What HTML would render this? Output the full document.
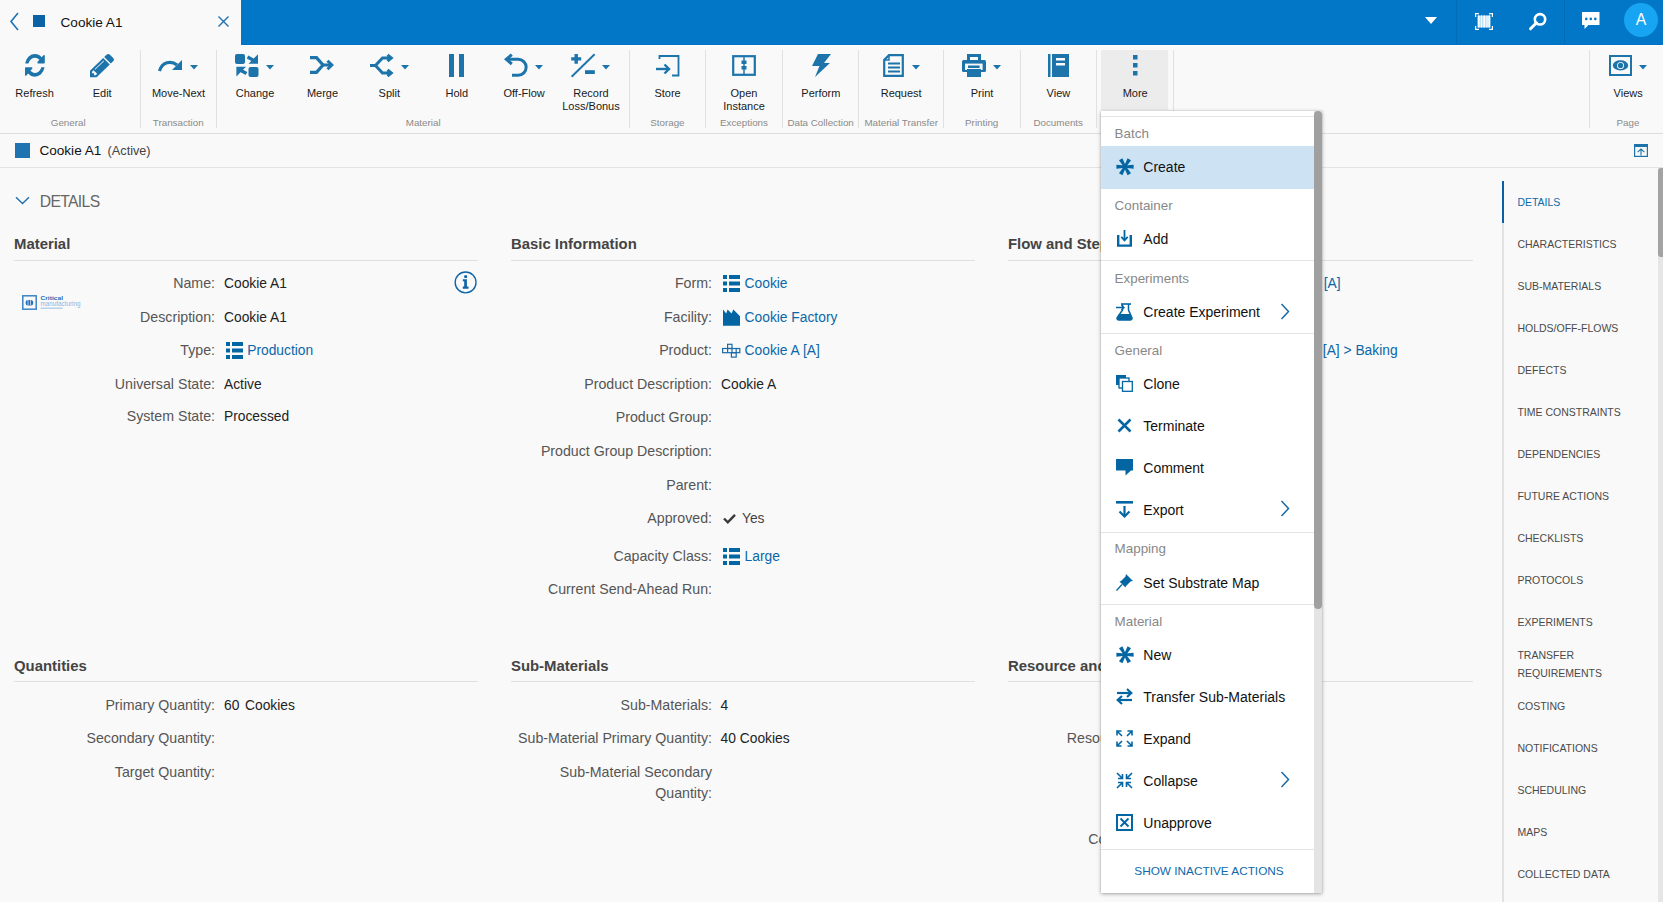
<!DOCTYPE html>
<html><head><meta charset="utf-8"><style>
html,body{margin:0;padding:0;width:1663px;height:902px;overflow:hidden;background:#f9f9f9;font-family:"Liberation Sans", sans-serif;}
.t{position:absolute;white-space:nowrap;}
svg{overflow:visible;}
</style></head><body>
<div style="position:absolute;left:0px;top:0px;width:1663px;height:45px;background:#f9f9f9;"></div>
<div style="position:absolute;left:241px;top:0px;width:1422px;height:45px;background:#0277c7;"></div>
<svg style="position:absolute;left:9px;top:12px;" width="11" height="19" viewBox="0 0 11 19"><path d="M9 1 L2 9.5 L9 18" fill="none" stroke="#1a73b8" stroke-width="1.6"/></svg>
<div style="position:absolute;left:33px;top:15px;width:12px;height:12px;background:#0b62a4;"></div>
<div class="t" style="left:60.5px;top:16.00px;font-size:13.6px;line-height:13.6px;color:#111;font-weight:normal;">Cookie A1</div>
<svg style="position:absolute;left:217px;top:15px;" width="13" height="13" viewBox="0 0 13 13"><path d="M1.5 1.5 L11.5 11.5 M11.5 1.5 L1.5 11.5" fill="none" stroke="#1d6fae" stroke-width="1.4"/></svg>
<svg style="position:absolute;left:1425px;top:17px;" width="12" height="7" viewBox="0 0 12 7"><path d="M0 0 H12 L6 7 Z" fill="#fff"/></svg>
<div style="position:absolute;left:1456px;top:0px;width:1px;height:45px;background:transparent;border-left:1px dotted rgba(0,40,80,0.3);"></div>
<div style="position:absolute;left:1564px;top:0px;width:1px;height:45px;background:transparent;border-left:1px dotted rgba(0,40,80,0.3);"></div>
<svg style="position:absolute;left:1475px;top:13px;" width="18" height="17" viewBox="0 0 18 17"><path d="M0.6 4 V0.6 H4 M14 0.6 H17.4 V4 M17.4 13 V16.4 H14 M4 16.4 H0.6 V13" fill="none" stroke="#fff" stroke-width="1.2"/><rect x="2.5" y="2.5" width="13" height="12" fill="#bfe3f7"/><rect x="3" y="2.5" width="1.5" height="12" fill="#fff"/><rect x="6" y="2.5" width="1" height="12" fill="#fff"/><rect x="8.5" y="2.5" width="1.5" height="12" fill="#fff"/><rect x="11.5" y="2.5" width="1" height="12" fill="#fff"/><rect x="13.5" y="2.5" width="1.5" height="12" fill="#fff"/></svg>
<svg style="position:absolute;left:1528px;top:12px;" width="20" height="19" viewBox="0 0 20 19"><circle cx="12" cy="7.3" r="5.2" fill="none" stroke="#fff" stroke-width="2.6"/><path d="M8.5 10.8 L2.5 16.8" stroke="#fff" stroke-width="3" stroke-linecap="round"/></svg>
<svg style="position:absolute;left:1582px;top:12px;" width="18" height="17" viewBox="0 0 18 17"><path d="M0 0 H17.5 V13 H6.5 L2.5 17 V13 H0 Z" fill="#fff"/><circle cx="4.3" cy="6.9" r="1.3" fill="#0277c7"/><circle cx="8.8" cy="6.9" r="1.3" fill="#0277c7"/><circle cx="13.3" cy="6.9" r="1.3" fill="#0277c7"/></svg>
<div style="position:absolute;left:1624px;top:3px;width:34px;height:34px;border-radius:50%;background:#17a4f2;"></div>
<div class="t" style="left:1341px;width:600px;text-align:center;top:12.00px;font-size:15.8px;line-height:15.8px;color:#fff;font-weight:normal;">A</div>
<div style="position:absolute;left:0px;top:45px;width:1663px;height:88px;background:#f9f9f9;"></div>
<div style="position:absolute;left:241px;top:44px;width:1422px;height:1px;background:#0271c2;"></div>
<div style="position:absolute;left:241px;top:45px;width:1422px;height:1px;background:#ffffff;"></div>
<div style="position:absolute;left:0px;top:133px;width:1663px;height:1px;background:#dedede;"></div>
<div style="position:absolute;left:140px;top:50px;width:1px;height:78px;background:#e1e1e1;"></div>
<div style="position:absolute;left:216px;top:50px;width:1px;height:78px;background:#e1e1e1;"></div>
<div style="position:absolute;left:629px;top:50px;width:1px;height:78px;background:#e1e1e1;"></div>
<div style="position:absolute;left:705px;top:50px;width:1px;height:78px;background:#e1e1e1;"></div>
<div style="position:absolute;left:782px;top:50px;width:1px;height:78px;background:#e1e1e1;"></div>
<div style="position:absolute;left:858px;top:50px;width:1px;height:78px;background:#e1e1e1;"></div>
<div style="position:absolute;left:943px;top:50px;width:1px;height:78px;background:#e1e1e1;"></div>
<div style="position:absolute;left:1020px;top:50px;width:1px;height:78px;background:#e1e1e1;"></div>
<div style="position:absolute;left:1096px;top:50px;width:1px;height:78px;background:#e1e1e1;"></div>
<div style="position:absolute;left:1173px;top:50px;width:1px;height:78px;background:#e1e1e1;"></div>
<div style="position:absolute;left:1589px;top:50px;width:1px;height:78px;background:#e1e1e1;"></div>
<div style="position:absolute;left:1101px;top:50px;width:67px;height:60px;background:#ececec;"></div>
<div class="t" style="left:-265.4px;width:600px;text-align:center;top:88.00px;font-size:11px;line-height:11px;color:#1a1a1a;font-weight:normal;">Refresh</div>
<div class="t" style="left:-197.8px;width:600px;text-align:center;top:88.00px;font-size:11px;line-height:11px;color:#1a1a1a;font-weight:normal;">Edit</div>
<div class="t" style="left:-121.5px;width:600px;text-align:center;top:88.00px;font-size:11px;line-height:11px;color:#1a1a1a;font-weight:normal;">Move-Next</div>
<div class="t" style="left:-45px;width:600px;text-align:center;top:88.00px;font-size:11px;line-height:11px;color:#1a1a1a;font-weight:normal;">Change</div>
<div class="t" style="left:22.5px;width:600px;text-align:center;top:88.00px;font-size:11px;line-height:11px;color:#1a1a1a;font-weight:normal;">Merge</div>
<div class="t" style="left:89.30000000000001px;width:600px;text-align:center;top:88.00px;font-size:11px;line-height:11px;color:#1a1a1a;font-weight:normal;">Split</div>
<div class="t" style="left:156.8px;width:600px;text-align:center;top:88.00px;font-size:11px;line-height:11px;color:#1a1a1a;font-weight:normal;">Hold</div>
<div class="t" style="left:224.10000000000002px;width:600px;text-align:center;top:88.00px;font-size:11px;line-height:11px;color:#1a1a1a;font-weight:normal;">Off-Flow</div>
<div class="t" style="left:291px;width:600px;text-align:center;top:88.00px;font-size:11px;line-height:11px;color:#1a1a1a;font-weight:normal;">Record</div>
<div class="t" style="left:367.6px;width:600px;text-align:center;top:88.00px;font-size:11px;line-height:11px;color:#1a1a1a;font-weight:normal;">Store</div>
<div class="t" style="left:444px;width:600px;text-align:center;top:88.00px;font-size:11px;line-height:11px;color:#1a1a1a;font-weight:normal;">Open</div>
<div class="t" style="left:520.9px;width:600px;text-align:center;top:88.00px;font-size:11px;line-height:11px;color:#1a1a1a;font-weight:normal;">Perform</div>
<div class="t" style="left:601.2px;width:600px;text-align:center;top:88.00px;font-size:11px;line-height:11px;color:#1a1a1a;font-weight:normal;">Request</div>
<div class="t" style="left:682px;width:600px;text-align:center;top:88.00px;font-size:11px;line-height:11px;color:#1a1a1a;font-weight:normal;">Print</div>
<div class="t" style="left:758.4000000000001px;width:600px;text-align:center;top:88.00px;font-size:11px;line-height:11px;color:#1a1a1a;font-weight:normal;">View</div>
<div class="t" style="left:835.2px;width:600px;text-align:center;top:88.00px;font-size:11px;line-height:11px;color:#1a1a1a;font-weight:normal;">More</div>
<div class="t" style="left:1328.2px;width:600px;text-align:center;top:88.00px;font-size:11px;line-height:11px;color:#1a1a1a;font-weight:normal;">Views</div>
<div class="t" style="left:291px;width:600px;text-align:center;top:101.00px;font-size:11px;line-height:11px;color:#1a1a1a;font-weight:normal;">Loss/Bonus</div>
<div class="t" style="left:444px;width:600px;text-align:center;top:101.00px;font-size:11px;line-height:11px;color:#1a1a1a;font-weight:normal;">Instance</div>
<div class="t" style="left:-231.8px;width:600px;text-align:center;top:118.00px;font-size:9.8px;line-height:9.8px;color:#8a8a8a;font-weight:normal;">General</div>
<div class="t" style="left:-121.75px;width:600px;text-align:center;top:118.00px;font-size:9.8px;line-height:9.8px;color:#8a8a8a;font-weight:normal;">Transaction</div>
<div class="t" style="left:123.19999999999999px;width:600px;text-align:center;top:118.00px;font-size:9.8px;line-height:9.8px;color:#8a8a8a;font-weight:normal;">Material</div>
<div class="t" style="left:367.4px;width:600px;text-align:center;top:118.00px;font-size:9.8px;line-height:9.8px;color:#8a8a8a;font-weight:normal;">Storage</div>
<div class="t" style="left:444px;width:600px;text-align:center;top:118.00px;font-size:9.8px;line-height:9.8px;color:#8a8a8a;font-weight:normal;">Exceptions</div>
<div class="t" style="left:520.6px;width:600px;text-align:center;top:118.00px;font-size:9.8px;line-height:9.8px;color:#8a8a8a;font-weight:normal;">Data Collection</div>
<div class="t" style="left:601.2px;width:600px;text-align:center;top:118.00px;font-size:9.8px;line-height:9.8px;color:#8a8a8a;font-weight:normal;">Material Transfer</div>
<div class="t" style="left:681.7px;width:600px;text-align:center;top:118.00px;font-size:9.8px;line-height:9.8px;color:#8a8a8a;font-weight:normal;">Printing</div>
<div class="t" style="left:758.2px;width:600px;text-align:center;top:118.00px;font-size:9.8px;line-height:9.8px;color:#8a8a8a;font-weight:normal;">Documents</div>
<div class="t" style="left:1328px;width:600px;text-align:center;top:118.00px;font-size:9.8px;line-height:9.8px;color:#8a8a8a;font-weight:normal;">Page</div>
<svg style="position:absolute;left:24.5px;top:54.2px" width="19.8" height="22.7" viewBox="0 128 1536 1536" preserveAspectRatio="none"><path d="M1511 1056q0 5-1 7-64 268-268 434.5t-478 166.5q-146 0-282.5-55t-243.5-157l-129 129q-19 19-45 19t-45-19-19-45v-448q0-26 19-45t45-19h448q26 0 45 19t19 45-19 45l-137 137q71 66 161 102t187 36q134 0 250-65t186-179q11-17 53-117 8-23 30-23h192q13 0 22.5 9.5t9.5 22.5zm25-800v448q0 26-19 45t-45 19h-448q-26 0-45-19t-19-45 19-45l138-138q-148-137-349-137-134 0-250 65t-186 179q-11 17-53 117-8 23-30 23h-199q-13 0-22.5-9.5t-9.5-22.5v-7q65-268 270-434.5t480-166.5q146 0 284 55.5t245 156.5l130-129q19-19 45-19t45 19 19 45z" fill="#1c74ab"/></svg>
<svg style="position:absolute;left:90px;top:53.8px" width="24" height="23.2" viewBox="0 149 1515 1515" preserveAspectRatio="none"><path d="M363 1536l91-91-235-235-91 91v107h128v128h107zm523-928q0-22-22-22-10 0-17 7l-542 542q-7 7-7 17 0 22 22 22 10 0 17-7l542-542q7-7 7-17zm-54-192l416 416-832 832h-416v-416zm683 96q0 53-37 90l-166 166-416-416 166-165q36-38 90-38 53 0 91 38l235 234q37 39 37 91z" fill="#1c74ab"/></svg>
<svg style="position:absolute;left:158px;top:59px;" width="25" height="13" viewBox="0 0 25 13"><path d="M1.5 12 C4 3, 13 1, 19 6" fill="none" stroke="#1c74ab" stroke-width="3.2"/><path d="M24 1 V11 H14 Z" fill="#1c74ab"/></svg>
<svg style="position:absolute;left:190px;top:64.5px;" width="8" height="5" viewBox="0 0 8 5"><path d="M0 0 H8 L4 4.5 Z" fill="#1c74ab"/></svg>
<svg style="position:absolute;left:235px;top:54px;" width="24" height="23" viewBox="0 0 24 23"><rect x="0" y="0" width="10" height="10" rx="2" fill="#1c74ab"/><rect x="13.5" y="13" width="10" height="10" rx="2" fill="#1c74ab"/><path d="M12.5 3 L18 6" stroke="#1c74ab" stroke-width="3.2"/><path d="M23 0.3 V9.7 H13.5 Z" fill="#1c74ab"/><path d="M11.5 19.5 L6 16.5" stroke="#1c74ab" stroke-width="3.2"/><path d="M1.4 12.8 H11 L1.4 22.6 Z" fill="#1c74ab"/></svg>
<svg style="position:absolute;left:266px;top:64.5px;" width="8" height="5" viewBox="0 0 8 5"><path d="M0 0 H8 L4 4.5 Z" fill="#1c74ab"/></svg>
<svg style="position:absolute;left:310px;top:56px;" width="24" height="19" viewBox="0 0 24 19"><path d="M0 1.6 H6.5 L13 9 L6.5 16.4 H0" fill="none" stroke="#1c74ab" stroke-width="3.2"/><path d="M12 9 H21.5" stroke="#1c74ab" stroke-width="3"/><path d="M17.5 4.8 L21.8 9 L17.5 13.2" fill="none" stroke="#1c74ab" stroke-width="3"/></svg>
<svg style="position:absolute;left:370px;top:54px;" width="24" height="23" viewBox="0 0 24 23"><path d="M0 11.5 H6" stroke="#1c74ab" stroke-width="3"/><path d="M21 4 H12.5 L5.5 11.5 L12.5 19 H21" fill="none" stroke="#1c74ab" stroke-width="3"/><path d="M17.5 0.8 L21.3 4 L17.5 7.2 M17.5 15.8 L21.3 19 L17.5 22.2" fill="none" stroke="#1c74ab" stroke-width="3"/></svg>
<svg style="position:absolute;left:400.5px;top:64.5px;" width="8" height="5" viewBox="0 0 8 5"><path d="M0 0 H8 L4 4.5 Z" fill="#1c74ab"/></svg>
<svg style="position:absolute;left:449px;top:54px;" width="15" height="23" viewBox="0 0 15 23"><rect x="0" y="0" width="5" height="23" fill="#1c74ab"/><rect x="10" y="0" width="5" height="23" fill="#1c74ab"/></svg>
<svg style="position:absolute;left:504px;top:54px;" width="24" height="23" viewBox="0 0 24 23"><path d="M2 5.3 H14.2 A7.95 7.95 0 0 1 14.2 21.2 H8" fill="none" stroke="#1c74ab" stroke-width="3"/><path d="M7.8 0.6 L2.3 5.3 L7.8 10" fill="none" stroke="#1c74ab" stroke-width="3"/></svg>
<svg style="position:absolute;left:534.8px;top:64.5px;" width="8" height="5" viewBox="0 0 8 5"><path d="M0 0 H8 L4 4.5 Z" fill="#1c74ab"/></svg>
<svg style="position:absolute;left:570px;top:54px;" width="25" height="23" viewBox="0 0 25 23"><path d="M1.2 4.9 H11.2 M6.2 0 V9.7" stroke="#1c74ab" stroke-width="3.4"/><path d="M15 18.1 H24.8" stroke="#1c74ab" stroke-width="3.8"/><path d="M24.6 0.3 L1.6 22.8" stroke="#1c74ab" stroke-width="1.9"/></svg>
<svg style="position:absolute;left:602px;top:64.5px;" width="8" height="5" viewBox="0 0 8 5"><path d="M0 0 H8 L4 4.5 Z" fill="#1c74ab"/></svg>
<svg style="position:absolute;left:656px;top:55px;" width="24" height="22" viewBox="0 0 24 22"><path d="M3.5 4 V1 H22.5 V20.5 H16" fill="none" stroke="#1c74ab" stroke-width="1.8"/><path d="M0 14 H12" stroke="#1c74ab" stroke-width="2.4"/><path d="M8.5 9.5 L13 14 L8.5 18.5" fill="none" stroke="#1c74ab" stroke-width="2.4"/></svg>
<svg style="position:absolute;left:732px;top:55px;" width="24" height="21" viewBox="0 0 24 21"><rect x="1.2" y="1.2" width="21.6" height="18.6" fill="none" stroke="#1c74ab" stroke-width="2.2"/><path d="M12 1 V20" stroke="#1c74ab" stroke-width="1.5"/><rect x="9.5" y="5.5" width="5" height="3.5" fill="#1c74ab"/><rect x="9.5" y="11" width="5" height="3.5" fill="#1c74ab"/></svg>
<svg style="position:absolute;left:810px;top:54px;" width="22" height="23" viewBox="0 0 22 23"><path d="M8 0 H21 L14 9 H20 L5 23 L9.5 12 H2 Z" fill="#1c74ab"/></svg>
<svg style="position:absolute;left:883px;top:54px;" width="21" height="23" viewBox="0 0 21 23"><path d="M6 1.2 H19.8 V21.8 H1.2 V6 Z" fill="none" stroke="#1c74ab" stroke-width="2.2"/><path d="M1.2 6 H6 V1.2" fill="none" stroke="#1c74ab" stroke-width="1.5"/><path d="M5 9.5 H17 M5 13.5 H17 M5 17.5 H17" stroke="#1c74ab" stroke-width="1.8"/></svg>
<svg style="position:absolute;left:912px;top:64.5px;" width="8" height="5" viewBox="0 0 8 5"><path d="M0 0 H8 L4 4.5 Z" fill="#1c74ab"/></svg>
<svg style="position:absolute;left:962px;top:54px;" width="24" height="23" viewBox="0 0 24 23"><rect x="5" y="0" width="14" height="7" fill="#1c74ab"/><rect x="8" y="3" width="8" height="3" fill="#f9f9f9"/><rect x="0" y="6" width="24" height="12" rx="1.5" fill="#1c74ab"/><rect x="3" y="9.6" width="17.6" height="6.3" fill="#f9f9f9"/><rect x="6" y="11.5" width="11.6" height="2.5" fill="#1c74ab"/><rect x="5" y="15" width="14" height="8" fill="#1c74ab"/></svg>
<svg style="position:absolute;left:992.5px;top:64.5px;" width="8" height="5" viewBox="0 0 8 5"><path d="M0 0 H8 L4 4.5 Z" fill="#1c74ab"/></svg>
<svg style="position:absolute;left:1048px;top:54px;" width="21" height="23" viewBox="0 0 21 23"><rect x="0" y="0" width="2.5" height="23" fill="#1c74ab"/><rect x="4" y="0" width="17" height="23" fill="#1c74ab"/><rect x="8" y="4" width="9" height="2.5" fill="#fafafa"/><rect x="8" y="9" width="9" height="2.5" fill="#fafafa"/></svg>
<svg style="position:absolute;left:1133px;top:55px;" width="5" height="21" viewBox="0 0 5 21"><rect x="0" y="0" width="4.5" height="4.5" fill="#1c74ab"/><rect x="0" y="8" width="4.5" height="4.5" fill="#1c74ab"/><rect x="0" y="16" width="4.5" height="4.5" fill="#1c74ab"/></svg>
<svg style="position:absolute;left:1609px;top:55px;" width="23" height="21" viewBox="0 0 23 21"><rect x="1" y="1" width="21" height="19" fill="none" stroke="#1c74ab" stroke-width="2"/><ellipse cx="11.5" cy="10.4" rx="7.7" ry="5.1" fill="#1c74ab"/><circle cx="11.5" cy="10.4" r="3.5" fill="#f9f9f9"/><circle cx="11.5" cy="10.4" r="2.6" fill="#1c74ab"/></svg>
<svg style="position:absolute;left:1639px;top:64.5px;" width="8" height="5" viewBox="0 0 8 5"><path d="M0 0 H8 L4 4.5 Z" fill="#1c74ab"/></svg>
<div style="position:absolute;left:0px;top:134px;width:1663px;height:33px;background:#f9f9f9;"></div>
<div style="position:absolute;left:0px;top:167px;width:1663px;height:1px;background:#e3e3e3;"></div>
<div style="position:absolute;left:15px;top:143px;width:15px;height:15px;background:#1f73b0;"></div>
<div class="t" style="left:39.4px;top:144.00px;font-size:13.6px;line-height:13.6px;color:#111;font-weight:normal;">Cookie A1</div>
<div class="t" style="left:107.6px;top:145.00px;font-size:12.7px;line-height:12.7px;color:#444;font-weight:normal;">(Active)</div>
<svg style="position:absolute;left:1634px;top:144px;" width="14" height="13" viewBox="0 0 14 13"><rect x="0.6" y="0.6" width="12.8" height="11.8" fill="none" stroke="#1c74ab" stroke-width="1.2"/><rect x="0" y="0" width="14" height="3" fill="#1c74ab"/><path d="M7 5 V11.5 M3.6 8.2 L7 5 L10.4 8.2" fill="none" stroke="#1c74ab" stroke-width="1.1"/></svg>
<div style="position:absolute;left:0px;top:168px;width:1663px;height:734px;background:#f9f9f9;"></div>
<svg style="position:absolute;left:15px;top:196px;" width="15" height="9" viewBox="0 0 15 9"><path d="M1 1.2 L7.5 7.5 L14 1.2" fill="none" stroke="#1f6fae" stroke-width="1.4"/></svg>
<div class="t" style="left:39.8px;top:194.00px;font-size:15.7px;line-height:15.7px;color:#666;font-weight:normal;letter-spacing:-0.65px;">DETAILS</div>
<div class="t" style="left:14px;top:237.00px;font-size:14.9px;line-height:14.9px;color:#444;font-weight:bold;">Material</div>
<div style="position:absolute;left:14px;top:260px;width:464px;height:1px;background:#e0e0e0;"></div>
<div class="t" style="left:511px;top:237.00px;font-size:14.9px;line-height:14.9px;color:#444;font-weight:bold;">Basic Information</div>
<div style="position:absolute;left:511px;top:260px;width:464px;height:1px;background:#e0e0e0;"></div>
<div class="t" style="left:1008px;top:237.00px;font-size:14.9px;line-height:14.9px;color:#444;font-weight:bold;">Flow and Step</div>
<div style="position:absolute;left:1008px;top:260px;width:465px;height:1px;background:#e0e0e0;"></div>
<div class="t" style="right:1448px;text-align:right;top:276.00px;font-size:14.2px;line-height:14.2px;color:#555;font-weight:normal;">Name:</div>
<div class="t" style="left:224px;top:277.00px;font-size:13.8px;line-height:13.8px;color:#222;font-weight:normal;">Cookie A1</div>
<div class="t" style="right:1448px;text-align:right;top:310.00px;font-size:14.2px;line-height:14.2px;color:#555;font-weight:normal;">Description:</div>
<div class="t" style="left:224px;top:311.00px;font-size:13.8px;line-height:13.8px;color:#222;font-weight:normal;">Cookie A1</div>
<div class="t" style="right:1448px;text-align:right;top:343.00px;font-size:14.2px;line-height:14.2px;color:#555;font-weight:normal;">Type:</div>
<div class="t" style="left:247.2px;top:344.00px;font-size:13.8px;line-height:13.8px;color:#0a67a8;font-weight:normal;">Production</div>
<div class="t" style="right:1448px;text-align:right;top:377.00px;font-size:14.2px;line-height:14.2px;color:#555;font-weight:normal;">Universal State:</div>
<div class="t" style="left:224px;top:378.00px;font-size:13.8px;line-height:13.8px;color:#222;font-weight:normal;">Active</div>
<div class="t" style="right:1448px;text-align:right;top:409.00px;font-size:14.2px;line-height:14.2px;color:#555;font-weight:normal;">System State:</div>
<div class="t" style="left:224px;top:410.00px;font-size:13.8px;line-height:13.8px;color:#222;font-weight:normal;">Processed</div>
<svg style="position:absolute;left:226px;top:342px;" width="17" height="17" viewBox="0 0 17 17"><rect x="0" y="0" width="4" height="4" fill="#0366a3"/><rect x="6" y="0" width="11" height="4" fill="#0366a3"/><rect x="0" y="6.5" width="4" height="4" fill="#0366a3"/><rect x="6" y="6.5" width="11" height="4" fill="#0366a3"/><rect x="0" y="13" width="4" height="4" fill="#0366a3"/><rect x="6" y="13" width="11" height="4" fill="#0366a3"/></svg>
<svg style="position:absolute;left:454px;top:271px;" width="23" height="23" viewBox="0 0 23 23"><circle cx="11.6" cy="11.4" r="10.4" fill="none" stroke="#0e64a8" stroke-width="1.35"/><rect x="10.2" y="4.3" width="2.9" height="2.6" rx="0.6" fill="#0e64a8"/><path d="M8.8 8.2 H12.9 V15.6 H14.5 V17.8 H8.8 V15.6 H10.2 V10.3 H8.8 Z" fill="#0e64a8"/></svg>
<svg style="position:absolute;left:22px;top:295px;" width="60" height="16" viewBox="0 0 60 16"><rect x="0.8" y="0.8" width="13.4" height="13.4" fill="none" stroke="#3d83c6" stroke-width="1.5"/><rect x="3.6" y="4.9" width="7.6" height="5.5" rx="2.5" fill="#2a72b8"/><rect x="5.6" y="4.9" width="0.8" height="5.5" fill="#cfe0f0"/><rect x="8.2" y="4.9" width="0.8" height="5.5" fill="#cfe0f0"/><text x="18.5" y="5.3" font-family="Liberation Sans" font-size="6" font-weight="bold" fill="#2a6cb0" textLength="22.5" lengthAdjust="spacingAndGlyphs">Critical</text><text x="18.5" y="11" font-family="Liberation Sans" font-size="6.3" fill="#8db6de" textLength="40" lengthAdjust="spacingAndGlyphs">manufacturing</text><rect x="18.5" y="12.6" width="22" height="1.2" fill="#a9c8e8"/></svg>
<div class="t" style="right:951px;text-align:right;top:276.00px;font-size:14.2px;line-height:14.2px;color:#555;font-weight:normal;">Form:</div>
<div class="t" style="left:744.6px;top:277.00px;font-size:13.8px;line-height:13.8px;color:#0a67a8;font-weight:normal;">Cookie</div>
<svg style="position:absolute;left:723px;top:275px;" width="17" height="17" viewBox="0 0 17 17"><rect x="0" y="0" width="4" height="4" fill="#0366a3"/><rect x="6" y="0" width="11" height="4" fill="#0366a3"/><rect x="0" y="6.5" width="4" height="4" fill="#0366a3"/><rect x="6" y="6.5" width="11" height="4" fill="#0366a3"/><rect x="0" y="13" width="4" height="4" fill="#0366a3"/><rect x="6" y="13" width="11" height="4" fill="#0366a3"/></svg>
<div class="t" style="right:951px;text-align:right;top:310.00px;font-size:14.2px;line-height:14.2px;color:#555;font-weight:normal;">Facility:</div>
<div class="t" style="left:744.6px;top:311.00px;font-size:13.8px;line-height:13.8px;color:#0a67a8;font-weight:normal;">Cookie Factory</div>
<svg style="position:absolute;left:723px;top:309px;" width="17" height="17" viewBox="0 0 17 17"><path d="M0 16.8 V0.5 L3.2 4.5 L4.6 0.5 L8.5 4.5 L10.4 0.5 L17 7.2 V16.8 Z" fill="#0366a3"/></svg>
<div class="t" style="right:951px;text-align:right;top:343.00px;font-size:14.2px;line-height:14.2px;color:#555;font-weight:normal;">Product:</div>
<div class="t" style="left:744.6px;top:344.00px;font-size:13.8px;line-height:13.8px;color:#0a67a8;font-weight:normal;">Cookie A [A]</div>
<svg style="position:absolute;left:722px;top:343px;" width="18" height="15" viewBox="0 0 18 15"><g fill="none" stroke="#1a6aa8" stroke-width="1.2"><rect x="5.6" y="1.3" width="4.4" height="4.2"/><rect x="0.6" y="5.5" width="17.2" height="4.2"/><rect x="9.4" y="9.7" width="4.8" height="4.4"/><path d="M5.6 5.5 V9.7 M10 5.5 V9.7 M14.2 5.5 V9.7"/></g></svg>
<div class="t" style="right:951px;text-align:right;top:377.00px;font-size:14.2px;line-height:14.2px;color:#555;font-weight:normal;">Product Description:</div>
<div class="t" style="left:721px;top:378.00px;font-size:13.8px;line-height:13.8px;color:#222;font-weight:normal;">Cookie A</div>
<div class="t" style="right:951px;text-align:right;top:410.00px;font-size:14.2px;line-height:14.2px;color:#555;font-weight:normal;">Product Group:</div>
<div class="t" style="right:951px;text-align:right;top:444.00px;font-size:14.2px;line-height:14.2px;color:#555;font-weight:normal;">Product Group Description:</div>
<div class="t" style="right:951px;text-align:right;top:478.00px;font-size:14.2px;line-height:14.2px;color:#555;font-weight:normal;">Parent:</div>
<div class="t" style="right:951px;text-align:right;top:511.00px;font-size:14.2px;line-height:14.2px;color:#555;font-weight:normal;">Approved:</div>
<div class="t" style="left:742px;top:512.00px;font-size:13.8px;line-height:13.8px;color:#444;font-weight:normal;">Yes</div>
<svg style="position:absolute;left:723px;top:513px;" width="13" height="11" viewBox="0 0 13 11"><path d="M1 5.5 L4.8 9.3 L12 1.8" fill="none" stroke="#3a3a3a" stroke-width="2.4"/></svg>
<div class="t" style="right:951px;text-align:right;top:549.00px;font-size:14.2px;line-height:14.2px;color:#555;font-weight:normal;">Capacity Class:</div>
<div class="t" style="left:744.6px;top:550.00px;font-size:13.8px;line-height:13.8px;color:#0a67a8;font-weight:normal;">Large</div>
<svg style="position:absolute;left:723px;top:548px;" width="17" height="17" viewBox="0 0 17 17"><rect x="0" y="0" width="4" height="4" fill="#0366a3"/><rect x="6" y="0" width="11" height="4" fill="#0366a3"/><rect x="0" y="6.5" width="4" height="4" fill="#0366a3"/><rect x="6" y="6.5" width="11" height="4" fill="#0366a3"/><rect x="0" y="13" width="4" height="4" fill="#0366a3"/><rect x="6" y="13" width="11" height="4" fill="#0366a3"/></svg>
<div class="t" style="right:951px;text-align:right;top:582.00px;font-size:14.2px;line-height:14.2px;color:#555;font-weight:normal;">Current Send-Ahead Run:</div>
<div class="t" style="left:1323.7px;top:277.00px;font-size:13.8px;line-height:13.8px;color:#0a67a8;font-weight:normal;">[A]</div>
<div class="t" style="left:1322.8px;top:344.00px;font-size:13.8px;line-height:13.8px;color:#0a67a8;font-weight:normal;">[A] &gt; Baking</div>
<div class="t" style="left:14px;top:659.00px;font-size:14.9px;line-height:14.9px;color:#444;font-weight:bold;">Quantities</div>
<div style="position:absolute;left:14px;top:681px;width:464px;height:1px;background:#e0e0e0;"></div>
<div class="t" style="left:511px;top:659.00px;font-size:14.9px;line-height:14.9px;color:#444;font-weight:bold;">Sub-Materials</div>
<div style="position:absolute;left:511px;top:681px;width:464px;height:1px;background:#e0e0e0;"></div>
<div class="t" style="left:1008px;top:659.00px;font-size:14.9px;line-height:14.9px;color:#444;font-weight:bold;">Resource and</div>
<div style="position:absolute;left:1008px;top:681px;width:465px;height:1px;background:#e0e0e0;"></div>
<div class="t" style="right:1448px;text-align:right;top:698.00px;font-size:14.2px;line-height:14.2px;color:#555;font-weight:normal;">Primary Quantity:</div>
<div class="t" style="left:224px;top:699.00px;font-size:13.8px;line-height:13.8px;color:#222;font-weight:normal;">60</div>
<div class="t" style="left:245px;top:699.00px;font-size:13.8px;line-height:13.8px;color:#222;font-weight:normal;">Cookies</div>
<div class="t" style="right:1448px;text-align:right;top:731.00px;font-size:14.2px;line-height:14.2px;color:#555;font-weight:normal;">Secondary Quantity:</div>
<div class="t" style="right:1448px;text-align:right;top:765.00px;font-size:14.2px;line-height:14.2px;color:#555;font-weight:normal;">Target Quantity:</div>
<div class="t" style="right:951px;text-align:right;top:698.00px;font-size:14.2px;line-height:14.2px;color:#555;font-weight:normal;">Sub-Materials:</div>
<div class="t" style="left:720.6px;top:699.00px;font-size:13.8px;line-height:13.8px;color:#222;font-weight:normal;">4</div>
<div class="t" style="right:951px;text-align:right;top:731.00px;font-size:14.2px;line-height:14.2px;color:#555;font-weight:normal;">Sub-Material Primary Quantity:</div>
<div class="t" style="left:720.6px;top:732.00px;font-size:13.8px;line-height:13.8px;color:#222;font-weight:normal;">40 Cookies</div>
<div class="t" style="right:951px;text-align:right;top:765.00px;font-size:14.2px;line-height:14.2px;color:#555;font-weight:normal;">Sub-Material Secondary</div>
<div class="t" style="right:951px;text-align:right;top:786.00px;font-size:14.2px;line-height:14.2px;color:#555;font-weight:normal;">Quantity:</div>
<div class="t" style="left:1066.8px;top:731.00px;font-size:14.2px;line-height:14.2px;color:#555;font-weight:normal;">Resource</div>
<div class="t" style="left:1088.3px;top:832.00px;font-size:14.2px;line-height:14.2px;color:#555;font-weight:normal;">Co</div>
<div style="position:absolute;left:1502px;top:181px;width:2px;height:721px;background:#e2e2e2;"></div>
<div style="position:absolute;left:1502px;top:181px;width:2px;height:42px;background:#0a5ea3;"></div>
<div class="t" style="left:1517.4px;top:197.00px;font-size:10.5px;line-height:10.5px;color:#0d69ab;font-weight:normal;">DETAILS</div>
<div class="t" style="left:1517.4px;top:239.00px;font-size:10.5px;line-height:10.5px;color:#4a4a4a;font-weight:normal;">CHARACTERISTICS</div>
<div class="t" style="left:1517.4px;top:281.00px;font-size:10.5px;line-height:10.5px;color:#4a4a4a;font-weight:normal;">SUB-MATERIALS</div>
<div class="t" style="left:1517.4px;top:323.00px;font-size:10.5px;line-height:10.5px;color:#4a4a4a;font-weight:normal;">HOLDS/OFF-FLOWS</div>
<div class="t" style="left:1517.4px;top:365.00px;font-size:10.5px;line-height:10.5px;color:#4a4a4a;font-weight:normal;">DEFECTS</div>
<div class="t" style="left:1517.4px;top:407.00px;font-size:10.5px;line-height:10.5px;color:#4a4a4a;font-weight:normal;">TIME CONSTRAINTS</div>
<div class="t" style="left:1517.4px;top:449.00px;font-size:10.5px;line-height:10.5px;color:#4a4a4a;font-weight:normal;">DEPENDENCIES</div>
<div class="t" style="left:1517.4px;top:491.00px;font-size:10.5px;line-height:10.5px;color:#4a4a4a;font-weight:normal;">FUTURE ACTIONS</div>
<div class="t" style="left:1517.4px;top:533.00px;font-size:10.5px;line-height:10.5px;color:#4a4a4a;font-weight:normal;">CHECKLISTS</div>
<div class="t" style="left:1517.4px;top:575.00px;font-size:10.5px;line-height:10.5px;color:#4a4a4a;font-weight:normal;">PROTOCOLS</div>
<div class="t" style="left:1517.4px;top:617.00px;font-size:10.5px;line-height:10.5px;color:#4a4a4a;font-weight:normal;">EXPERIMENTS</div>
<div class="t" style="left:1517.4px;top:650.00px;font-size:10.5px;line-height:10.5px;color:#4a4a4a;font-weight:normal;">TRANSFER</div>
<div class="t" style="left:1517.4px;top:668.00px;font-size:10.5px;line-height:10.5px;color:#4a4a4a;font-weight:normal;">REQUIREMENTS</div>
<div class="t" style="left:1517.4px;top:701.00px;font-size:10.5px;line-height:10.5px;color:#4a4a4a;font-weight:normal;">COSTING</div>
<div class="t" style="left:1517.4px;top:743.00px;font-size:10.5px;line-height:10.5px;color:#4a4a4a;font-weight:normal;">NOTIFICATIONS</div>
<div class="t" style="left:1517.4px;top:785.00px;font-size:10.5px;line-height:10.5px;color:#4a4a4a;font-weight:normal;">SCHEDULING</div>
<div class="t" style="left:1517.4px;top:827.00px;font-size:10.5px;line-height:10.5px;color:#4a4a4a;font-weight:normal;">MAPS</div>
<div class="t" style="left:1517.4px;top:869.00px;font-size:10.5px;line-height:10.5px;color:#4a4a4a;font-weight:normal;">COLLECTED DATA</div>
<div style="position:absolute;left:1658px;top:168px;width:5px;height:734px;background:#e6e6e6;"></div>
<div style="position:absolute;left:1658px;top:168px;width:5px;height:89px;background:#a3a3a3;border-radius:3px 0 0 3px;"></div>
<div style="position:absolute;left:1101px;top:110.5px;width:221px;height:782.5px;background:#fff;box-shadow:0 1px 4px rgba(0,0,0,0.32), 0 0 1px rgba(0,0,0,0.25);"></div>
<div style="position:absolute;left:1101px;top:116px;width:213px;height:1px;background:#e3e3e3;"></div>
<div style="position:absolute;left:1101px;top:146px;width:213px;height:42.5px;background:#cde3f3;"></div>
<div class="t" style="left:1114.6px;top:127.00px;font-size:13.4px;line-height:13.4px;color:#888;font-weight:normal;">Batch</div>
<div class="t" style="left:1143.3px;top:160.00px;font-size:14px;line-height:14px;color:#111;font-weight:normal;">Create</div>
<div class="t" style="left:1114.6px;top:199.00px;font-size:13.4px;line-height:13.4px;color:#888;font-weight:normal;">Container</div>
<div class="t" style="left:1143.3px;top:232.00px;font-size:14px;line-height:14px;color:#111;font-weight:normal;">Add</div>
<div style="position:absolute;left:1101px;top:260px;width:213px;height:1px;background:#e3e3e3;"></div>
<div class="t" style="left:1114.6px;top:272.00px;font-size:13.4px;line-height:13.4px;color:#888;font-weight:normal;">Experiments</div>
<div class="t" style="left:1143.3px;top:305.00px;font-size:14px;line-height:14px;color:#111;font-weight:normal;">Create Experiment</div>
<svg style="position:absolute;left:1280px;top:302.8px;" width="10" height="18" viewBox="0 0 10 18"><path d="M1.5 1 L8.5 8.5 L1.5 16" fill="none" stroke="#1a6aa8" stroke-width="1.5"/></svg>
<div style="position:absolute;left:1101px;top:333px;width:213px;height:1px;background:#e3e3e3;"></div>
<div class="t" style="left:1114.6px;top:344.00px;font-size:13.4px;line-height:13.4px;color:#888;font-weight:normal;">General</div>
<div class="t" style="left:1143.3px;top:377.00px;font-size:14px;line-height:14px;color:#111;font-weight:normal;">Clone</div>
<div class="t" style="left:1143.3px;top:419.00px;font-size:14px;line-height:14px;color:#111;font-weight:normal;">Terminate</div>
<div class="t" style="left:1143.3px;top:461.00px;font-size:14px;line-height:14px;color:#111;font-weight:normal;">Comment</div>
<div class="t" style="left:1143.3px;top:503.00px;font-size:14px;line-height:14px;color:#111;font-weight:normal;">Export</div>
<svg style="position:absolute;left:1280px;top:500.1px;" width="10" height="18" viewBox="0 0 10 18"><path d="M1.5 1 L8.5 8.5 L1.5 16" fill="none" stroke="#1a6aa8" stroke-width="1.5"/></svg>
<div style="position:absolute;left:1101px;top:531.5px;width:213px;height:1px;background:#e3e3e3;"></div>
<div class="t" style="left:1114.6px;top:542.00px;font-size:13.4px;line-height:13.4px;color:#888;font-weight:normal;">Mapping</div>
<div class="t" style="left:1143.3px;top:576.00px;font-size:14px;line-height:14px;color:#111;font-weight:normal;">Set Substrate Map</div>
<div style="position:absolute;left:1101px;top:604px;width:213px;height:1px;background:#e3e3e3;"></div>
<div class="t" style="left:1114.6px;top:615.00px;font-size:13.4px;line-height:13.4px;color:#888;font-weight:normal;">Material</div>
<div class="t" style="left:1143.3px;top:648.00px;font-size:14px;line-height:14px;color:#111;font-weight:normal;">New</div>
<div class="t" style="left:1143.3px;top:690.00px;font-size:14px;line-height:14px;color:#111;font-weight:normal;">Transfer Sub-Materials</div>
<div class="t" style="left:1143.3px;top:732.00px;font-size:14px;line-height:14px;color:#111;font-weight:normal;">Expand</div>
<div class="t" style="left:1143.3px;top:774.00px;font-size:14px;line-height:14px;color:#111;font-weight:normal;">Collapse</div>
<svg style="position:absolute;left:1280px;top:771.0px;" width="10" height="18" viewBox="0 0 10 18"><path d="M1.5 1 L8.5 8.5 L1.5 16" fill="none" stroke="#1a6aa8" stroke-width="1.5"/></svg>
<div class="t" style="left:1143.3px;top:816.00px;font-size:14px;line-height:14px;color:#111;font-weight:normal;">Unapprove</div>
<div style="position:absolute;left:1101px;top:849px;width:213px;height:1px;background:#e3e3e3;"></div>
<div class="t" style="left:909px;width:600px;text-align:center;top:866.00px;font-size:11.8px;line-height:11.8px;color:#0d69ab;font-weight:normal;">SHOW INACTIVE ACTIONS</div>
<div style="position:absolute;left:1314px;top:110.5px;width:8px;height:782.5px;background:#e4e4e4;"></div>
<div style="position:absolute;left:1314px;top:110.5px;width:8px;height:498px;background:#a0a0a0;border-radius:4px;"></div>
<svg style="position:absolute;left:1115.5px;top:158px;" width="18" height="18" viewBox="0 0 18 18"><g fill="#0366a3"><path d="M9.00 9.80 L17.60 10.70 L17.60 6.70 L9.00 7.60 Z"/><path d="M8.05 9.25 L11.57 17.15 L15.03 15.15 L9.95 8.15 Z"/><path d="M8.05 8.15 L2.97 15.15 L6.43 17.15 L9.95 9.25 Z"/><path d="M9.00 7.60 L0.40 6.70 L0.40 10.70 L9.00 9.80 Z"/><path d="M9.95 8.15 L6.43 0.25 L2.97 2.25 L8.05 9.25 Z"/><path d="M9.95 9.25 L15.03 2.25 L11.57 0.25 L8.05 8.15 Z"/><circle cx="9" cy="8.7" r="2"/></g></svg>
<svg style="position:absolute;left:1117px;top:230px;" width="16" height="17" viewBox="0 0 16 17"><path d="M1.2 5 V15.6 H13.8 V5" fill="none" stroke="#0366a3" stroke-width="2.4"/><path d="M7.5 0 V10" stroke="#0366a3" stroke-width="1.8"/><path d="M4.3 6.8 L7.5 10.3 L10.7 6.8" fill="none" stroke="#0366a3" stroke-width="1.8"/></svg>
<svg style="position:absolute;left:1116px;top:303px;" width="17" height="17" viewBox="0 0 17 17"><path d="M5 1 H15" stroke="#0366a3" stroke-width="1.6"/><path d="M6.5 1 V7 L1 15 Q1 17 3 17 H14 Q16 17 16 15 L12.5 7 V1" fill="none" stroke="#0366a3" stroke-width="1.5"/><path d="M3 11 H14 L16 15 Q16 17 14 17 H3 Q1 17 1 15 Z" fill="#0366a3"/><path d="M0 4.5 H8 M5.5 2 L8 4.5 L5.5 7" fill="none" stroke="#0366a3" stroke-width="1.3"/></svg>
<svg style="position:absolute;left:1116px;top:375px;" width="17" height="17" viewBox="0 0 17 17"><rect x="0" y="0" width="10" height="10" fill="#0366a3"/><rect x="3" y="3" width="10" height="10" fill="#fff" stroke="#0366a3" stroke-width="1.3"/><rect x="6.5" y="6.5" width="9.8" height="9.8" fill="#fff" stroke="#0366a3" stroke-width="1.3"/></svg>
<svg style="position:absolute;left:1117px;top:418px;" width="15" height="15" viewBox="0 0 15 15"><path d="M1.5 1.5 L13.5 13.5 M13.5 1.5 L1.5 13.5" stroke="#0366a3" stroke-width="2.5"/></svg>
<svg style="position:absolute;left:1116px;top:459px;" width="18" height="16" viewBox="0 0 18 16"><path d="M0 0 H17 V11.5 H15 L9.5 16.5 V11.5 H0 Z" fill="#0366a3"/></svg>
<svg style="position:absolute;left:1116px;top:501px;" width="17" height="17" viewBox="0 0 17 17"><rect x="0" y="0" width="17" height="2.6" fill="#0366a3"/><path d="M8.5 5 V15.5" stroke="#0366a3" stroke-width="2.2"/><path d="M3.5 10.5 L8.5 15.5 L13.5 10.5" fill="none" stroke="#0366a3" stroke-width="2.2"/></svg>
<svg style="position:absolute;left:1116px;top:574px;" width="17" height="17" viewBox="0 0 17 17"><path d="M10 0 L17 7 L14.5 7.5 L10 12 L9.5 13.5 L3.5 7.5 L5 7 L9.5 2.5 Z" fill="#0366a3"/><path d="M6 10.5 L0.5 16.5" stroke="#0366a3" stroke-width="1.3"/></svg>
<svg style="position:absolute;left:1115.5px;top:646px;" width="18" height="18" viewBox="0 0 18 18"><g fill="#0366a3"><path d="M9.00 9.80 L17.60 10.70 L17.60 6.70 L9.00 7.60 Z"/><path d="M8.05 9.25 L11.57 17.15 L15.03 15.15 L9.95 8.15 Z"/><path d="M8.05 8.15 L2.97 15.15 L6.43 17.15 L9.95 9.25 Z"/><path d="M9.00 7.60 L0.40 6.70 L0.40 10.70 L9.00 9.80 Z"/><path d="M9.95 8.15 L6.43 0.25 L2.97 2.25 L8.05 9.25 Z"/><path d="M9.95 9.25 L15.03 2.25 L11.57 0.25 L8.05 8.15 Z"/><circle cx="9" cy="8.7" r="2"/></g></svg>
<svg style="position:absolute;left:1116px;top:688px;" width="17" height="17" viewBox="0 0 17 17"><path d="M1 5 H15" stroke="#0366a3" stroke-width="2.2"/><path d="M11 1 L15.3 5 L11 9" fill="none" stroke="#0366a3" stroke-width="2.2"/><path d="M16 12 H2" stroke="#0366a3" stroke-width="2.2"/><path d="M6 8 L1.7 12 L6 16" fill="none" stroke="#0366a3" stroke-width="2.2"/></svg>
<svg style="position:absolute;left:1116px;top:730px;" width="17" height="17" viewBox="0 0 17 17"><g fill="none" stroke="#0366a3" stroke-width="1.6"><path d="M1 1 L6 6 M1 5.5 V1 H5.5"/><path d="M16 1 L11 6 M11.5 1 H16 V5.5"/><path d="M1 16 L6 11 M1 11.5 V16 H5.5"/><path d="M16 16 L11 11 M11.5 16 H16 V11.5"/></g></svg>
<svg style="position:absolute;left:1116px;top:772px;" width="17" height="17" viewBox="0 0 17 17"><g fill="none" stroke="#0366a3" stroke-width="1.6"><path d="M1 1 L6.5 6.5 M2 6.5 H6.5 V2"/><path d="M16 1 L10.5 6.5 M10.5 2 V6.5 H15"/><path d="M1 16 L6.5 10.5 M2 10.5 H6.5 V15"/><path d="M16 16 L10.5 10.5 M10.5 15 V10.5 H15"/></g></svg>
<svg style="position:absolute;left:1116px;top:814px;" width="17" height="17" viewBox="0 0 17 17"><rect x="1" y="1" width="15" height="15" fill="none" stroke="#0366a3" stroke-width="2"/><path d="M4.5 4.5 L12.5 12.5 M12.5 4.5 L4.5 12.5" stroke="#0366a3" stroke-width="1.8"/></svg>
</body></html>
